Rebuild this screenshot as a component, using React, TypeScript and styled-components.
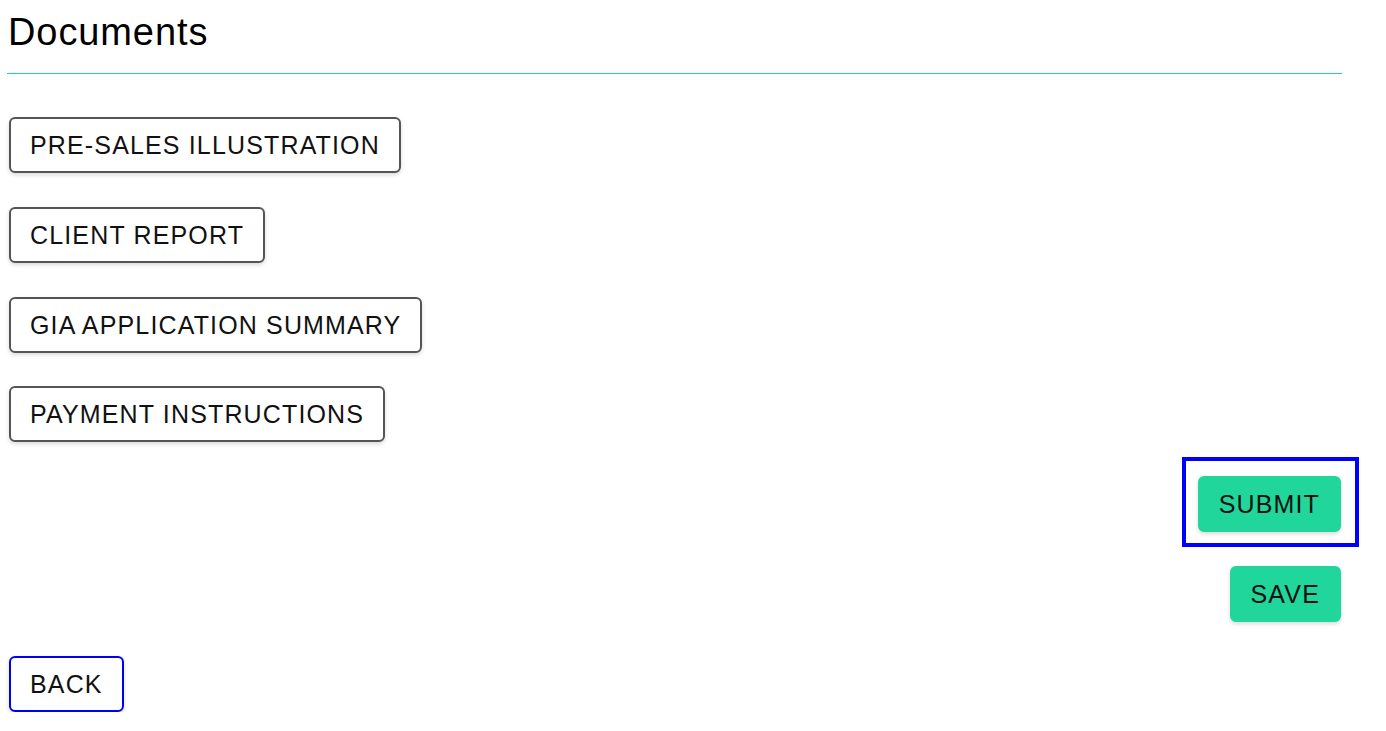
import { createGlobalStyle, styled } from "styled-components";

const GlobalStyle = createGlobalStyle`
  body {
    margin: 0;
    background: #fff;
    font-family: "Liberation Sans", Arial, sans-serif;
    color: #111;
  }
`;

const Page = styled.div`
  width: 1335px;
  padding: 6px 0 0 7px;
  display: flex;
  flex-direction: column;
`;

const Title = styled.h1`
  margin: 0;
  padding-left: 1px;
  font-size: 38px;
  font-weight: 400;
  letter-spacing: 0.9px;
  line-height: 52px;
  height: 52px;
  color: #000;
`;

const Divider = styled.div`
  margin-top: 15px;
  height: 1px;
  background: #1fd699;
`;

const Actions = styled.div`
  margin-top: 43px;
  display: flex;
  flex-direction: column;
  gap: 33.8px;
`;

const Row = styled.div<{ $align?: "start" | "end" }>`
  display: flex;
  justify-content: ${(p) => (p.$align === "end" ? "flex-end" : "flex-start")};
  padding: 0 1px 0 2px;
`;

const Button = styled.button<{ $variant?: "outline" | "primary" | "back"; $focused?: boolean }>`
  position: relative;
  height: 56px;
  padding: 1px 19px 0;
  font-family: inherit;
  font-size: 25px;
  letter-spacing: 1.15px;
  font-weight: 400;
  color: #111;
  border-radius: 6px;
  cursor: pointer;
  box-shadow: 0 2px 4px rgba(0, 0, 0, 0.15);
  border: 2px solid
    ${(p) => (p.$variant === "back" ? "#0000ee" : p.$variant === "primary" ? "#20d69a" : "#555")};
  background: ${(p) => (p.$variant === "primary" ? "#20d69a" : "#fff")};
  outline: none;

  &::after {
    content: "";
    display: ${(p) => (p.$focused ? "block" : "none")};
    position: absolute;
    top: -21px;
    left: -18px;
    right: -20px;
    bottom: -17px;
    border: 4px solid #0000ff;
    pointer-events: none;
  }
`;

const documents = [
  "PRE-SALES ILLUSTRATION",
  "CLIENT REPORT",
  "GIA APPLICATION SUMMARY",
  "PAYMENT INSTRUCTIONS",
];

export default function App() {
  return (
    <>
      <GlobalStyle />
      <Page>
        <Title>Documents</Title>
        <Divider />
        <Actions>
          {documents.map((d) => (
            <Row key={d}>
              <Button $variant="outline">{d}</Button>
            </Row>
          ))}
          <Row $align="end">
            <Button $variant="primary" $focused>
              SUBMIT
            </Button>
          </Row>
          <Row $align="end">
            <Button $variant="primary">SAVE</Button>
          </Row>
          <Row>
            <Button $variant="back">BACK</Button>
          </Row>
        </Actions>
      </Page>
    </>
  );
}
